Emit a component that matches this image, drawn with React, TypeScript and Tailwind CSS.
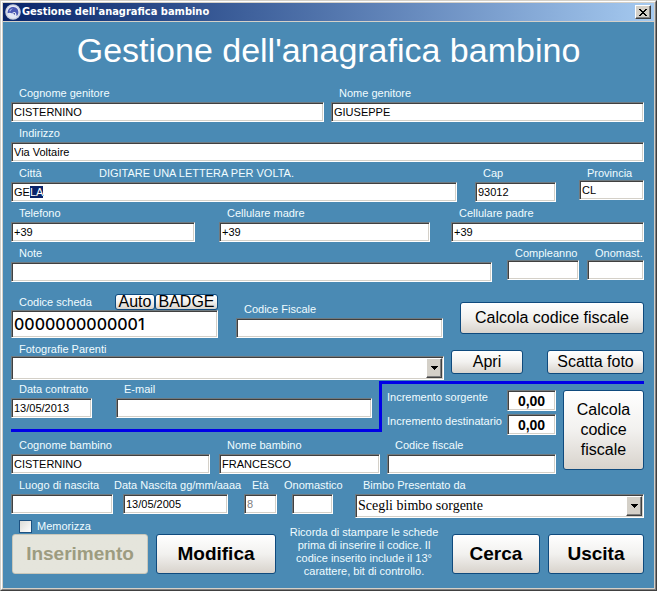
// src/App.tsx
import { useEffect, useRef, useState } from 'react'
import type { ComponentProps, ReactNode } from 'react'
import clsx from 'clsx'

const SUNKEN =
  'border border-t-[#6f7a80] border-l-[#6f7a80] border-b-white border-r-white bg-white shadow-[inset_1px_1px_0_#404040,inset_-1px_-1px_0_#d4d0c8]'

function TextBox({ className, ...rest }: ComponentProps<'input'>) {
  return (
    <input
      type="text"
      className={clsx(
        SUNKEN,
        'block w-full min-w-0 px-[2px] outline-none selection:bg-[#0a246a] selection:text-white disabled:text-[#808080]',
        className ?? 'h-5 text-[11px] leading-4 text-black',
      )}
      {...rest}
    />
  )
}

type FieldProps = {
  id: string
  label: string
  value?: string
  className?: string
  labelClass?: string
  boxWrap?: string
  disabled?: boolean
  hint?: ReactNode
}

function Field({ id, label, value = '', className, labelClass, boxWrap, disabled, hint }: FieldProps) {
  return (
    <div className={clsx('shrink-0', className)}>
      <div className="flex whitespace-nowrap">
        <label htmlFor={id} className={labelClass ?? 'h-5 pl-2 leading-[22px]'}>
          {label}
        </label>
        {hint}
      </div>
      <div className={boxWrap}>
        <TextBox id={id} defaultValue={value} disabled={disabled} />
      </div>
    </div>
  )
}

function Combo({ id, className, options }: { id: string; className: string; options: string[] }) {
  return (
    <div className={clsx('relative', className)}>
      <select
        id={id}
        className={clsx(
          SUNKEN,
          'block h-full w-full appearance-none pr-5 pl-[2px] font-["Liberation_Serif",serif] text-[14px] leading-5 text-black outline-none',
        )}
      >
        {options.map((o) => (
          <option key={o}>{o}</option>
        ))}
      </select>
      <span className="pointer-events-none absolute top-[2px] right-[2px] bottom-[2px] flex w-4 items-center justify-center border border-t-white border-l-white border-b-[#404040] border-r-[#404040] bg-[#d4d0c8] shadow-[inset_-1px_-1px_0_#808080]">
        <svg width="7" height="4" viewBox="0 0 7 4" shapeRendering="crispEdges" aria-hidden="true">
          <path d="M0 0h7v1H6v1H5v1H4v1H3V3H2V2H1V1H0z" fill="#000" />
        </svg>
      </span>
    </div>
  )
}

function XpButton({ className, ...rest }: ComponentProps<'button'>) {
  return (
    <button
      type="button"
      className={clsx(
        'shrink-0 rounded-[3px] border border-[#0f4a7d] bg-linear-to-b from-white via-[#f2f1ef] to-[#d8d3cc] font-["Liberation_Sans",sans-serif] text-black',
        'disabled:border-[#c9c7ba] disabled:from-[#e5e5dc] disabled:via-[#e5e5dc] disabled:to-[#e5e5dc] disabled:text-[#9d9c80]',
        className,
      )}
      {...rest}
    />
  )
}

function AppIcon() {
  return (
    <svg width="16" height="16" viewBox="0 0 16 16" aria-hidden="true">
      <circle cx="8" cy="8" r="7.8" fill="#c9cfe0" />
      <circle cx="8" cy="8" r="6.4" fill="#e2e7f6" />
      <path d="M2.6 9.200C2.400 5.400 5 2.800 8.400 3c3 .1 5 2.300 5 5.200 0 1.800-.7 3-1.900 3.900.1-2-.4-3.500-1.900-4.100-1.300-.4-2.300.4-2.100 1.600-1.900-1.200-3.700-1.100-4.900-.4z" fill="#4a58b4" />
      <path d="M4.200 7.200C4.900 5.300 6.500 4.300 8.200 4.500 6.800 5.100 5.900 6 5.700 7.300z" fill="#a9b6e6" />
      <path d="M8.200 8.800l1.800.4-.6 2z" fill="#2a3790" />
    </svg>
  )
}

function TitleBar() {
  return (
    <div className="flex h-[19px] items-center border-b border-[#d4d0c8] bg-linear-to-r from-[#0a246a] to-[#a6caf0] pr-[3px] pl-[2px]">
      <AppIcon />
      <span className='ml-px flex-1 font-["DejaVu_Sans_Condensed","DejaVu_Sans",sans-serif] text-[11px] leading-4 font-bold text-white'>
        Gestione dell'anagrafica bambino
      </span>
      <button
        type="button"
        aria-label="Chiudi"
        className="flex h-[14px] w-4 items-center justify-center border border-t-white border-l-white border-b-[#404040] border-r-[#404040] bg-[#d4d0c8] shadow-[inset_-1px_-1px_0_#808080]"
      >
        <svg width="8" height="7" viewBox="0 0 8 7" shapeRendering="crispEdges" aria-hidden="true">
          <path
            d="M0 0h2v1h1v1h2V1h1V0h2v1H7v1H6v1H5v1h1v1h1v1h1v1H6V6H5V5H3v1H2v1H0V6h1V5h1V4h1V3H2V2H1V1H0z"
            fill="#000"
          />
        </svg>
      </button>
    </div>
  )
}

function CityField() {
  const ref = useRef<HTMLInputElement>(null)

  useEffect(() => {
    ref.current?.focus()
    ref.current?.setSelectionRange(2, 4)
  }, [])

  return (
    <div className="min-w-0 flex-1">
      <div className="flex h-5 pl-2 leading-[22px]">
        <label htmlFor="citta" className="w-20">
          Città
        </label>
        <span>DIGITARE UNA LETTERA PER VOLTA.</span>
      </div>
      <TextBox id="citta" ref={ref} defaultValue="GELA" />
    </div>
  )
}

function ParentSection() {
  return (
    <>
      <div className="flex gap-[7px]">
        <Field id="cognome" label="Cognome genitore" value="CISTERNINO" className="flex-1" />
        <Field id="nome" label="Nome genitore" value="GIUSEPPE" className="flex-1" />
      </div>
      <Field id="indirizzo" label="Indirizzo" value="Via Voltaire" />
      <div className="flex">
        <CityField />
        <Field id="cap" label="Cap" value="93012" className="ml-[18px] w-[81px]" />
        <Field id="provincia" label="Provincia" value="CL" className="ml-[23px] w-[65px]" labelClass="h-[18px] pl-2 leading-[22px]" />
      </div>
      <div className="flex">
        <Field id="telefono" label="Telefono" value="+39" className="w-[184px]" />
        <Field id="cell-madre" label="Cellulare madre" value="+39" className="ml-6 w-[211px]" />
        <Field id="cell-padre" label="Cellulare padre" value="+39" className="ml-[21px] flex-1" />
      </div>
      <div className="flex">
        <Field id="note" label="Note" className="flex-1" />
        <Field id="compleanno" label="Compleanno" className="ml-[15px] w-[72px]" labelClass="h-[18px] pl-2 leading-[22px]" />
        <Field id="onomast" label="Onomast." className="ml-2 w-[57px]" labelClass="h-[18px] pl-2 leading-[22px]" />
      </div>

      <div className="mt-3 flex items-end">
        <div className="w-[207px]">
          <div className="flex h-4 items-center">
            <label htmlFor="scheda" className="flex-1 pl-2 leading-4">
              Codice scheda
            </label>
            <XpButton className="h-4 w-10 text-[16px] leading-[14px]">Auto</XpButton>
            <XpButton className="h-4 w-[63px] text-[16px] leading-[14px]">BADGE</XpButton>
          </div>
          <TextBox
            id="scheda"
            defaultValue="0000000000001"
            className='h-7 font-["Inter",sans-serif] text-[16px] leading-6 font-medium text-black'
          />
        </div>
        <Field id="cf-genitore" label="Codice Fiscale" className="ml-[18px] w-[207px]" />
        <XpButton className="mb-1 ml-auto h-8 w-[184px] text-[16px]">Calcola codice fiscale</XpButton>
      </div>

      <div className="flex items-end">
        <div className="min-w-0 flex-1">
          <label htmlFor="foto" className="block h-[18px] pl-2 leading-[22px]">
            Fotografie Parenti
          </label>
          <Combo id="foto" className="h-6" options={['']} />
        </div>
        <XpButton className="mb-[6px] ml-[7px] h-6 w-[72px] text-[16px] leading-5">Apri</XpButton>
        <XpButton className="mb-[6px] ml-6 h-6 w-[97px] text-[16px] leading-5">Scatta foto</XpButton>
      </div>
    </>
  )
}

function Increment({ id, label }: { id: string; label: string }) {
  return (
    <div className="flex">
      <label htmlFor={id} className="flex-1 leading-[14px] whitespace-nowrap">
        {label}
      </label>
      <div className="w-[49px]">
        <TextBox
          id={id}
          defaultValue="0,00"
          className='h-[21px] text-center font-["Liberation_Sans",sans-serif] text-[14px] leading-4 font-bold text-black'
        />
      </div>
    </div>
  )
}

function ContractSection() {
  return (
    <div className="mt-px flex">
      <div className="min-w-0 flex-1">
        <div className="flex items-start">
          <div className="flex flex-1 border-r-3 border-b-3 border-[#0000e6] pr-[7px] pb-[11px]">
            <Field id="contratto" label="Data contratto" value="13/05/2013" className="w-[81px]" labelClass="pl-2 leading-[17px]" />
            <Field id="email" label="E-mail" className="ml-6 flex-1" labelClass="pl-2 leading-[17px]" />
          </div>
          <div className="flex w-[181px] flex-col gap-[3px] border-t-3 border-[#0000e6] pt-[6px] pr-[7px] pb-px pl-[5px]">
            <Increment id="inc-sorg" label="Incremento sorgente" />
            <Increment id="inc-dest" label="Incremento destinatario" />
          </div>
        </div>
        <div className="flex pr-[7px]">
          <Field id="cognome-b" label="Cognome bambino" value="CISTERNINO" className="w-[199px]" labelClass="pl-2 leading-[18px]" />
          <Field id="nome-b" label="Nome bambino" value="FRANCESCO" className="ml-[9px] w-[161px]" labelClass="pl-2 leading-[18px]" />
          <Field id="cf-b" label="Codice fiscale" className="ml-[7px] flex-1" labelClass="pl-2 leading-[18px]" />
        </div>
      </div>
      <div className="w-[81px] border-t-3 border-[#0000e6] pt-[6px]">
        <XpButton className="h-20 w-full text-[16px] leading-5">
          Calcola
          <br />
          codice
          <br />
          fiscale
        </XpButton>
      </div>
    </div>
  )
}

function ChildSection() {
  return (
    <div className="flex items-start">
      <Field id="luogo" label="Luogo di nascita" className="w-[102px]" />
      <Field
        id="nascita"
        label="Data Nascita gg/mm/aaaa"
        value="13/05/2005"
        className="ml-px w-[122px]"
        labelClass="h-5 leading-[22px]"
        boxWrap="pr-2 pl-[9px]"
      />
      <Field id="eta" label="Età" value="8" disabled className="ml-2 w-[33px]" />
      <Field
        id="onomastico"
        label="Onomastico"
        className="ml-[7px] w-[57px]"
        labelClass="h-5 leading-[22px]"
        boxWrap="px-2"
      />
      <div className="ml-[14px] min-w-0 flex-1">
        <label htmlFor="bimbo" className="block h-5 pl-2 leading-[22px]">
          Bimbo Presentato da
        </label>
        <Combo id="bimbo" className="h-6" options={['Scegli bimbo sorgente']} />
      </div>
    </div>
  )
}

function Actions() {
  const [memo, setMemo] = useState(false)

  return (
    <div className="flex items-start">
      <div className="pl-px">
        <label className="flex h-4 w-fit items-center gap-[5px] pl-[7px]">
          <input
            type="checkbox"
            checked={memo}
            onChange={(e) => setMemo(e.target.checked)}
            className="size-[13px] appearance-none border border-[#1c5180] bg-linear-to-br from-[#dcdcd7] to-white checked:bg-[#1c5180]"
          />
          Memorizza
        </label>
        <div className="flex gap-2">
          <XpButton disabled className="h-10 w-[136px] text-[19px] font-bold">
            Inserimento
          </XpButton>
          <XpButton className="h-10 w-[120px] text-[19px] font-bold">Modifica</XpButton>
        </div>
      </div>
      <p className="mt-2 flex-1 text-center leading-[13px]">
        Ricorda di stampare le schede
        <br />
        prima di inserire il codice. Il
        <br />
        codice inserito include il 13°
        <br />
        carattere, bit di controllo.
      </p>
      <div className="mt-4 flex gap-2">
        <XpButton className="h-10 w-[88px] text-[19px] font-bold">Cerca</XpButton>
        <XpButton className="h-10 w-24 text-[19px] font-bold">Uscita</XpButton>
      </div>
    </div>
  )
}

export default function App() {
  return (
    <div className="min-h-screen border border-t-[#d4d0c8] border-l-[#d4d0c8] border-b-[#404040] border-r-[#404040]">
      <div className="flex min-h-[calc(100vh-2px)] flex-col border border-t-white border-l-white border-b-[#808080] border-r-[#808080]">
        <main className='flex-1 border border-[#d4d0c8] bg-[#4a8ab4] font-["Liberation_Sans",sans-serif] text-[11px] text-[#f0fcff]'>
          <TitleBar />
          <h1 className='pt-2 text-center font-["Liberation_Sans",sans-serif] text-[34px] leading-[40px] text-white'>
            Gestione dell'anagrafica bambino
          </h1>
          <form className="pt-3 pr-[10px] pb-2 pl-2" onSubmit={(e) => e.preventDefault()}>
            <ParentSection />
            <ContractSection />
            <ChildSection />
            <Actions />
          </form>
        </main>
      </div>
    </div>
  )
}
